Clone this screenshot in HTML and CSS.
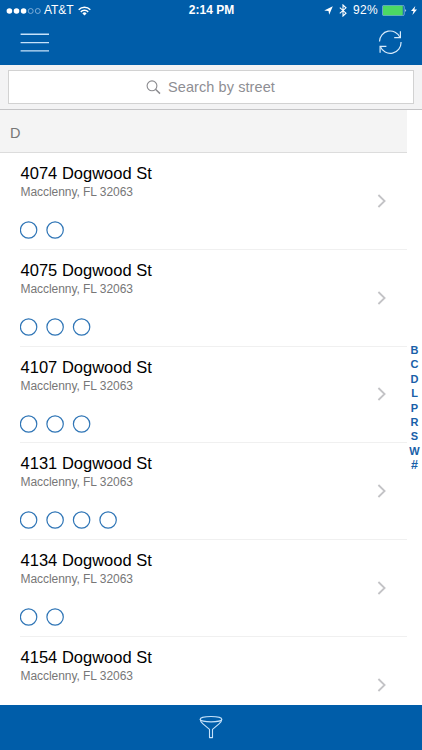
FILE: index.html
```html
<!DOCTYPE html>
<html lang="en">
<head>
    <meta charset="UTF-8">
    <meta name="viewport" content="width=device-width, initial-scale=1">
    <title>Addresses</title>
    <link rel="stylesheet" href="styles.css">
</head>
<body>
    <header class="header">
        <div class="status-bar">
            <div class="status-left">
                <svg class="signal" width="36" height="8" viewBox="0 0 36 8">
                    <g fill="#fff">
                        <circle cx="3.4" cy="4" r="2.8"/>
                        <circle cx="10.5" cy="4" r="2.8"/>
                        <circle cx="17.6" cy="4" r="2.8"/>
                    </g>
                    <g fill="none" stroke="#a9c9e8" stroke-width="0.7">
                        <circle cx="24.7" cy="4" r="2.5"/>
                        <circle cx="31.8" cy="4" r="2.5"/>
                    </g>
                </svg>
                <span class="carrier">AT&amp;T</span>
                <svg class="wifi" width="13" height="10" viewBox="0 0 13 10">
                    <g fill="none" stroke="#fff" stroke-width="1.5">
                        <path d="M0.7 3.7a8.2 8.2 0 0 1 11.6 0"/>
                        <path d="M2.8 5.9a5.2 5.2 0 0 1 7.4 0"/>
                    </g>
                    <path d="M4.4 7.4a3 3 0 0 1 4.2 0L6.5 9.6z" fill="#fff"/>
                </svg>
            </div>
            <span class="time">2:14 PM</span>
            <div class="status-right">
                <svg class="location" width="9" height="9" viewBox="0 0 9 9">
                    <path d="M8.8 0.2L5.2 8.8L4.5 4.9L0.2 4.4z" fill="#fff"/>
                </svg>
                <svg class="bluetooth" width="8" height="13" viewBox="0 0 8 13">
                    <path d="M0.8 3.6L7 9.2L4 12V1L7 3.8L0.8 9.4" fill="none" stroke="#fff" stroke-width="1.1"/>
                </svg>
                <span class="percent">92%</span>
                <svg class="battery" width="25" height="11" viewBox="0 0 25 11">
                    <rect x="0.4" y="0.4" width="21.8" height="10.2" rx="1.4" fill="none" stroke="#8fbbe0" stroke-width="0.8"/>
                    <rect x="1" y="0.8" width="19.8" height="9.4" rx="0.6" fill="#4cd964"/>
                    <path d="M23.4 3.9q1.6 1.6 0 3.2z" fill="#fff"/>
                </svg>
                <svg class="bolt" width="6" height="9" viewBox="0 0 6 9">
                    <path d="M4.3 0L0 5.1H2.5L1.4 9L6 3.6H3.4z" fill="#fff"/>
                </svg>
            </div>
        </div>
        <div class="nav-bar">
            <svg class="menu-icon" width="29" height="19" viewBox="0 0 29 19">
                <path d="M0.6 1.3H29M0.6 9.6H29M0.6 17.9H29" stroke="#c6e2fa" stroke-width="1.4"/>
            </svg>
            <svg class="refresh-icon" width="24" height="24" viewBox="0 0 24 24">
                <g fill="none" stroke="#d8ebfb" stroke-width="1.2">
                    <path d="M1.5 11.5A10.7 10.7 0 0 1 22 7.4"/>
                    <path d="M22.4 1.2V7.6H16.2"/>
                    <path d="M23 12A10.7 10.7 0 0 1 2.3 16.4"/>
                    <path d="M2.1 22.8V16.3H8.4"/>
                </g>
            </svg>
        </div>
    </header>

    <div class="search">
        <div class="search-box">
            <svg class="search-icon" width="15" height="15" viewBox="0 0 15 15">
                <g fill="none" stroke="#8b8b8f">
                    <circle cx="6" cy="5.8" r="4.9" stroke-width="1.1"/>
                    <path d="M9.5 9.3L14 13.6" stroke-width="1.5"/>
                </g>
            </svg>
            <span class="search-text">Search by street</span>
        </div>
    </div>

    <main class="content">
        <div class="list">
            <div class="section">D</div>
            <div class="row">
                <div class="info">
                    <div class="street">4074 Dogwood St</div>
                    <div class="city">Macclenny, FL 32063</div>
                    <svg class="circles" width="100" height="18">
                        <circle cx="8.6" cy="9" r="8.2"/>
                        <circle cx="35.1" cy="9" r="8.2"/>
                    </svg>
                </div>
                <svg class="arrow" width="9" height="14" viewBox="0 0 9 14"><path d="M1.4 1L7.6 7L1.4 13"/></svg>
            </div>
            <div class="row">
                <div class="info">
                    <div class="street">4075 Dogwood St</div>
                    <div class="city">Macclenny, FL 32063</div>
                    <svg class="circles" width="100" height="18">
                        <circle cx="8.6" cy="9" r="8.2"/>
                        <circle cx="35.1" cy="9" r="8.2"/>
                        <circle cx="61.6" cy="9" r="8.2"/>
                    </svg>
                </div>
                <svg class="arrow" width="9" height="14" viewBox="0 0 9 14"><path d="M1.4 1L7.6 7L1.4 13"/></svg>
            </div>
            <div class="row">
                <div class="info">
                    <div class="street">4107 Dogwood St</div>
                    <div class="city">Macclenny, FL 32063</div>
                    <svg class="circles" width="100" height="18">
                        <circle cx="8.6" cy="9" r="8.2"/>
                        <circle cx="35.1" cy="9" r="8.2"/>
                        <circle cx="61.6" cy="9" r="8.2"/>
                    </svg>
                </div>
                <svg class="arrow" width="9" height="14" viewBox="0 0 9 14"><path d="M1.4 1L7.6 7L1.4 13"/></svg>
            </div>
            <div class="row">
                <div class="info">
                    <div class="street">4131 Dogwood St</div>
                    <div class="city">Macclenny, FL 32063</div>
                    <svg class="circles" width="100" height="18">
                        <circle cx="8.6" cy="9" r="8.2"/>
                        <circle cx="35.1" cy="9" r="8.2"/>
                        <circle cx="61.6" cy="9" r="8.2"/>
                        <circle cx="88.1" cy="9" r="8.2"/>
                    </svg>
                </div>
                <svg class="arrow" width="9" height="14" viewBox="0 0 9 14"><path d="M1.4 1L7.6 7L1.4 13"/></svg>
            </div>
            <div class="row">
                <div class="info">
                    <div class="street">4134 Dogwood St</div>
                    <div class="city">Macclenny, FL 32063</div>
                    <svg class="circles" width="100" height="18">
                        <circle cx="8.6" cy="9" r="8.2"/>
                        <circle cx="35.1" cy="9" r="8.2"/>
                    </svg>
                </div>
                <svg class="arrow" width="9" height="14" viewBox="0 0 9 14"><path d="M1.4 1L7.6 7L1.4 13"/></svg>
            </div>
            <div class="row">
                <div class="info">
                    <div class="street">4154 Dogwood St</div>
                    <div class="city">Macclenny, FL 32063</div>
                </div>
                <svg class="arrow" width="9" height="14" viewBox="0 0 9 14"><path d="M1.4 1L7.6 7L1.4 13"/></svg>
            </div>
        </div>

        <nav class="index">
            <span>B</span>
            <span>C</span>
            <span>D</span>
            <span>L</span>
            <span>P</span>
            <span>R</span>
            <span>S</span>
            <span>W</span>
            <span class="hash">#</span>
        </nav>
    </main>

    <footer class="footer">
        <svg class="filter-icon" width="24" height="24" viewBox="0 0 24 24">
            <g fill="none" stroke="#c6e2fa" stroke-width="1.1" stroke-linejoin="round">
                <ellipse cx="12" cy="4.2" rx="10.8" ry="2.7"/>
                <path d="M1.2 4.2C1.2 6.3 2.3 7.3 4 8.8L10.5 14.4V22.6H13.5V14.4L20 8.8C21.7 7.3 22.8 6.3 22.8 4.2"/>
            </g>
        </svg>
    </footer>
</body>
</html>
```
FILE: styles.css
```css
* {
    box-sizing: border-box;
}

body {
    display: flex;
    flex-direction: column;
    height: 100vh;
    margin: 0;
    overflow: hidden;
    background-color: #fff;
    font-family: "Liberation Sans", Arial, sans-serif;
}

svg {
    display: block;
    flex: none;
}

/* Header */
.header {
    flex: none;
    height: 65px;
    background-color: #005da9;
    color: #fff;
}

.status-bar {
    display: grid;
    grid-template-columns: 1fr auto 1fr;
    align-items: center;
    height: 21px;
    padding: 0 5px 0 6px;
    font-size: 12px;
    line-height: 21px;
}

.status-left,
.status-right {
    display: flex;
    align-items: center;
}

.status-right {
    justify-content: flex-end;
}

.carrier {
    margin-left: 2px;
    letter-spacing: -0.1px;
}

.wifi {
    margin-left: 5px;
}

.time {
    font-weight: bold;
}

.bluetooth {
    margin: 0 6px;
}

.percent {
    letter-spacing: 0.3px;
}

.battery {
    margin: 0 4px;
}

.nav-bar {
    display: flex;
    justify-content: space-between;
    align-items: center;
    height: 42px;
    padding: 0 20px;
}

/* Search */
.search {
    flex: none;
    height: 45px;
    padding: 5px 8px 0;
    background-color: #f3f3f4;
    border-bottom: 1px solid #c4c4c6;
}

.search-box {
    display: flex;
    justify-content: center;
    align-items: center;
    gap: 7px;
    height: 34px;
    padding-right: 1px;
    border: 1px solid #d2d2d2;
    background-color: #fff;
}

.search-text {
    color: #8e8e93;
    font-size: 14.5px;
    letter-spacing: 0.08px;
}

/* List */
.content {
    display: flex;
    flex: 1;
    min-height: 0;
}

.list {
    width: 407px;
    overflow: hidden;
}

.section {
    height: 43px;
    padding-left: 10px;
    border-bottom: 1px solid #dcdcdc;
    background-color: #f4f4f4;
    color: #777;
    font-size: 14.5px;
    line-height: 47px;
}

.row {
    display: flex;
    justify-content: space-between;
    align-items: center;
    height: 96.8px;
    margin-left: 20px;
    padding-right: 21px;
    border-bottom: 1px solid #f0f0f0;
}

.info {
    align-self: flex-start;
    padding-top: 11px;
}

.street {
    padding-left: 0.6px;
    color: #000;
    font-size: 16.5px;
    line-height: 19px;
}

.city {
    padding-left: 0.5px;
    color: #777;
    font-size: 12px;
    line-height: 18px;
    letter-spacing: -0.05px;
}

.circles {
    margin-top: 20px;
    fill: none;
    stroke: #2f75b6;
    stroke-width: 1.2;
}

.arrow path {
    fill: none;
    stroke: #c3c3c6;
    stroke-width: 1.8;
}

.index {
    display: flex;
    flex: 1;
    flex-direction: column;
    align-items: center;
    padding-top: 233px;
    color: #1960a8;
    font-size: 11px;
    font-weight: bold;
    line-height: 14.4px;
}

.hash {
    font-size: 12.5px;
}

/* Footer */
.footer {
    display: flex;
    flex: none;
    justify-content: center;
    height: 45px;
    padding-top: 10px;
    background-color: #005da9;
}
```
